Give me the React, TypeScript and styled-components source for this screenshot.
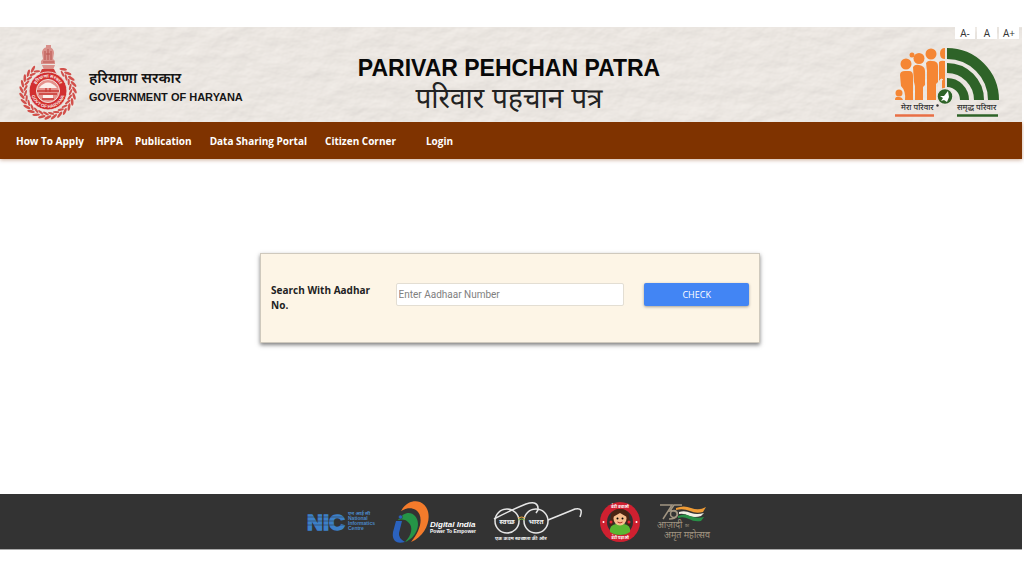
import React from "react";
import styled, { createGlobalStyle } from "styled-components";

const GlobalStyle = createGlobalStyle`
  *, *::before, *::after { box-sizing: border-box; }
  body { margin: 0; background: #fff; font-family: "Open Sans", "Noto Sans", sans-serif; }
`;

const Page = styled.div`
  display: flex;
  flex-direction: column;
  min-height: 100vh;
  padding: 27px 2px 26px 0;
`;

const Banner = styled.header`
  position: relative;
  display: grid;
  grid-template-columns: 1fr auto 1fr;
  align-items: center;
  min-height: 95px;
  padding: 16px 22px 0 18px;
  background: #e6e1dc;
  isolation: isolate;
`;

const Paper = styled.svg`
  position: absolute;
  inset: 0;
  width: 100%;
  height: 100%;
  z-index: -1;
`;

const TextSizes = styled.div`
  position: absolute;
  top: 0;
  right: 3px;
  display: flex;
  gap: 2px;
`;

const SizeButton = styled.button`
  min-width: 20px;
  height: 12px;
  padding: 0 3px;
  border: 0;
  background: #fff;
  color: #333;
  font: 10px/10px "Open Sans", sans-serif;
`;

const State = styled.div`
  display: flex;
  align-items: center;
  gap: 10px;
`;

const StateName = styled.div`
  font-family: "Liberation Sans", "Noto Sans Devanagari", sans-serif;
  font-weight: 700;
  color: #151515;
  white-space: nowrap;
  padding-top: 8px;
`;

const StateHindi = styled.div`
  font-size: 15px;
  line-height: 20px;
  font-weight: 600;
`;

const StateEnglish = styled.div`
  font-size: 11px;
  line-height: 18px;
`;

const Titles = styled.div`
  padding-top: 3px;
  text-align: center;
  white-space: nowrap;
`;

const Title = styled.h1`
  margin: 0;
  font: 700 23px/30px "Liberation Sans", sans-serif;
  color: #080808;
`;

const HindiTitle = styled.div`
  font: 400 28px/32px "Liberation Sans", "Noto Sans Devanagari", sans-serif;
  color: #222;
`;

const SchemeLogo = styled.div`
  justify-self: end;
  height: 73px;
`;

const Nav = styled.nav`
  display: flex;
  flex-wrap: wrap;
  align-items: center;
  min-height: 37px;
  padding: 0 16px;
  background: #7f3300;
  box-shadow: 0 1px 4px rgba(127, 51, 0, 0.4);
`;

const NavLink = styled.a<{ $gap?: number }>`
  margin-right: ${(p) => p.$gap ?? 12}px;
  color: #fff;
  font-size: 10px;
  line-height: 16px;
  font-weight: 700;
  text-decoration: none;
  white-space: nowrap;
`;

const Main = styled.main`
  flex: 1;
  padding: 94px 2px 24px 0;
`;

const SearchCard = styled.form`
  display: grid;
  grid-template-columns: 1fr 2fr 1fr;
  width: 49%;
  min-width: 440px;
  margin: 0 auto;
  padding: 29px 0;
  background: #fdf5e6;
  border: 1px solid #cfc9bd;
  box-shadow: 0 2px 4px rgba(0, 0, 0, 0.5);
`;

const Cell = styled.div`
  padding: 0 10px;
`;

const Label = styled.label`
  display: block;
  color: #222;
  font-size: 10px;
  line-height: 15px;
  font-weight: 700;
`;

const AadhaarInput = styled.input`
  display: block;
  width: 100%;
  height: 23px;
  padding: 0 2px;
  border: 1px solid #e3ded3;
  border-radius: 2px;
  background: #fff;
  color: #333;
  font: 10px/16px Roboto, "Open Sans", sans-serif;
  &::placeholder { color: #808080; opacity: 1; }
`;

const CheckButton = styled.button`
  display: block;
  width: 100%;
  height: 23px;
  border: 0;
  border-radius: 2px;
  background: #4285f4;
  color: #fff;
  font: 9px/16px "Open Sans", sans-serif;
  box-shadow: 0 1px 3px rgba(0, 0, 0, 0.35);
`;

const Footer = styled.footer`
  display: flex;
  flex-wrap: wrap;
  align-items: center;
  justify-content: center;
  gap: 16px;
  min-height: 56px;
  padding-right: 3px;
  background: #333;
  border-bottom: 1px solid #aaa;
`;

const deva = '"Noto Sans Devanagari", "Noto Sans", sans-serif';

const leafAngles = Array.from({ length: 23 }, (_, i) => -55 + i * 13.2);

function Emblem() {
  return (
    <svg width="61" height="76" viewBox="0 0 61 76" role="img" aria-label="Haryana emblem">
      <g fill="#d9908a">
        <path d="M24 8c0-4 3-6 6-6s6 2 6 6l-1 6 2 2v3H23v-3l2-2z" />
        <path d="M24 20h13l-2 5h-9zM28 0h5v4h-5z" />
      </g>
      <g stroke="#b9554f" strokeWidth="1" fill="none">
        <path d="M27 6v9M30 4v11M33 6v9M25 17h11M28 9h4" />
      </g>
      <g fill="#d2504b">
        {leafAngles.map((a) => (
          <g key={a} transform={`translate(30 46) rotate(${a})`}>
            <ellipse cx="26.500" cy="0" rx="1.3" ry="3.8" transform="rotate(-28 26.500 0)" />
            <ellipse cx="22.500" cy="2" rx="1.1" ry="3.3" transform="rotate(28 22.500 2)" />
          </g>
        ))}
      </g>
      <path d="M24 24h12l3 6H21z" fill="#cf3b38" />
      <circle cx="30" cy="46" r="19" fill="#d22f2f" stroke="#f0dcd8" />
      <path id="emblem-top" d="M16.500 46a13.500 13.500 0 0 1 27 0" fill="none" />
      <path id="emblem-bottom" d="M13 46a17 17 0 0 0 34 0" fill="none" />
      <g fill="#f8e9e6" fontSize="4.500" fontWeight="700" textAnchor="middle">
        <text fontFamily={deva}><textPath href="#emblem-top" startOffset="50%">हरियाणा सरकार</textPath></text>
        <text fontFamily="Liberation Sans"><textPath href="#emblem-bottom" startOffset="50%">GOVT OF HARYANA</textPath></text>
      </g>
      <circle cx="30" cy="46" r="11.500" fill="#e5918c" stroke="#f3dfdb" />
      <path d="M21 43q9-11 18 0zM25 50h10v3H25z" fill="#fbeeeb" />
      <path d="M19 46h22M21 49h18M28 43v4M32 43v4M24 54h12" stroke="#c93834" strokeWidth="1.300" />
    </svg>
  );
}

function FamilyLogo() {
  return (
    <svg width="106" height="73" viewBox="0 0 106 73" role="img" aria-label="मेरा परिवार समृद्ध परिवार">
      <g fill="#f58634">
        <circle cx="5" cy="47" r="3.500" />
        <path d="M1 54q0-4 4-3 3 0 4 3z" />
        <circle cx="12" cy="18" r="5.500" />
        <path d="M6 29q0-4 5-4h4q4 0 4 5v24h-8q1-9-4-14z" />
        <circle cx="25" cy="12.500" r="5.500" />
        <circle cx="18" cy="9" r="2.500" />
        <path d="M19 21q2-3 6-2 6 1 6 6v14l-2 2v13h-8V40l-1-4z" />
        <circle cx="37" cy="8" r="5.500" />
        <path d="M32 17q2-3 6-2 6 0 6 5v16l-2 2v16h-9V25z" />
        <path d="M51 2v11q-5 0-5-5.500t5-5.500zM45 16q2-2 6-1v32l-3 2V33q-3 0-3 6z" />
      </g>
      <path d="M49 34q-3-3-4 4v10" stroke="#f6ebe1" fill="none" />
      <g fill="none" stroke="#2e6328">
        <path d="M53 7.500A46.500 46.500 0 0 1 99.500 54" strokeWidth="11" />
        <path d="M53 22A32 32 0 0 1 85 54" strokeWidth="10" />
        <path d="M53 36.500A17.500 17.500 0 0 1 70.500 54" strokeWidth="9" />
      </g>
      <circle cx="51" cy="50.500" r="8" fill="#2e6328" stroke="#e9e5df" strokeWidth="1.500" />
      <path d="M46 50l4 0 4-5 1 6-2 5-3-2-3 1 2-3z" fill="#fff" />
      <g fontFamily={deva} fontSize="8" fill="#333" fontWeight="500">
        <text x="7" y="64">मेरा परिवार</text>
        <text x="63" y="64">समृद्ध परिवार</text>
      </g>
      <circle cx="43.500" cy="59.500" r="1.200" fill="#333" />
      <path d="M1 69.500h39" stroke="#e96f45" strokeWidth="2.500" />
      <path d="M63 69.500h41" stroke="#2e6328" strokeWidth="2.500" />
    </svg>
  );
}

function NicLogo() {
  return (
    <svg width="70" height="24" viewBox="0 0 70 24" role="img" aria-label="NIC">
      <text x="1" y="20" fontFamily="Liberation Sans" fontWeight="700" fontSize="22" fill="#3c80c8" stroke="#3c80c8" strokeWidth="1.500">NIC</text>
      <path d="M0 7h40M0 11h40M0 15h40" stroke="#333" strokeWidth="0.500" />
      <g fontSize="5" fill="#4b88c6" fontFamily="Liberation Sans" fontWeight="700">
        <text x="42" y="5" fontFamily={deva}>एन आई सी</text>
        <text x="42" y="10">National</text>
        <text x="42" y="15">Informatics</text>
        <text x="42" y="20">Centre</text>
      </g>
    </svg>
  );
}

function DigitalIndiaLogo() {
  return (
    <svg width="85" height="46" viewBox="0 0 85 46" role="img" aria-label="Digital India">
      <path d="M9 12C14 3 22 1 28 3c14 6 11 31-9 40 10-12 13-26 5-32-5-3-10-2-15 1z" fill="#f47b2b" />
      <path d="M6 21c5-8 13-9 17-4 7 8 1 22-10 26 7-7 8-15 4-19-3-4-7-4-11-3z" fill="#259447" />
      <path d="M4 22h6l-3 12q-1 5 6 9-7 2-10-1-3-3-2-9z" fill="#2b62be" />
      <circle cx="8.500" cy="18" r="2" fill="#2b62be" stroke="#333" strokeWidth="0.500" />
      <g fill="#fff" fontFamily="Liberation Sans" fontWeight="700">
        <text x="38" y="28" fontSize="8" fontStyle="italic">Digital India</text>
        <text x="38" y="34" fontSize="5">Power To Empower</text>
      </g>
    </svg>
  );
}

function SwachhBharatLogo() {
  return (
    <svg width="90" height="40" viewBox="0 0 90 40" role="img" aria-label="स्वच्छ भारत">
      <g fill="none" stroke="#e6e6e6" strokeWidth="1.500">
        <circle cx="14" cy="19" r="12" />
        <circle cx="43" cy="19" r="12" />
        <path d="M1 17Q18 8 33 2q13-4 12 6l-2 3M55 18q15-6 27-11 9-2 5 8" />
      </g>
      <path d="M25 16q4-2 7 0" stroke="#f0a63b" fill="none" />
      <path d="M25 18q4-2 7 0" stroke="#7ab54a" fill="none" />
      <g fontFamily={deva} fontSize="7" fontWeight="700" fill="#f1f1f1">
        <text x="14" y="22" textAnchor="middle">स्वच्छ</text>
        <text x="43" y="22" textAnchor="middle">भारत</text>
        <text x="2" y="38" fontSize="5">एक कदम स्वच्छता की ओर</text>
      </g>
    </svg>
  );
}

function BetiLogo() {
  return (
    <svg width="42" height="42" viewBox="0 0 42 42" role="img" aria-label="बेटी बचाओ बेटी पढ़ाओ">
      <circle cx="21" cy="21" r="20" fill="#cf2030" />
      <circle cx="21" cy="21" r="13" fill="#303030" />
      <path d="M11 31q-1-7 6-8h8q7 1 6 8-4 3-10 3t-10-3z" fill="#5bb531" />
      <path d="M12 16q0-8 9-8t9 8l2 9q-4 1-5-5H15q-1 6-5 5z" fill="#4a2413" />
      <ellipse cx="21" cy="17.500" rx="6.500" ry="7" fill="#f5bd8c" />
      <path d="M14 16q1-7 7-7t7 7l-7-4z" fill="#4a2413" />
      <circle cx="12" cy="21" r="1.500" fill="#e22835" />
      <circle cx="30" cy="21" r="1.500" fill="#e22835" />
      <circle cx="18.500" cy="17.500" r="1" />
      <circle cx="23.500" cy="17.500" r="1" />
      <path d="M18.500 21q2.500 2 5 0" stroke="#b52727" fill="none" />
      <g fill="#fff" fontFamily={deva} fontSize="4" fontWeight="700" textAnchor="middle">
        <text x="21" y="7">बेटी बचाओ</text>
        <text x="21" y="38">बेटी पढ़ाओ</text>
      </g>
      <circle cx="4.500" cy="21" r="1" fill="#fff" />
      <circle cx="37.500" cy="21" r="1" fill="#fff" />
    </svg>
  );
}

function AmritLogo() {
  return (
    <svg width="56" height="40" viewBox="0 0 56 40" role="img" aria-label="आज़ादी का अमृत महोत्सव">
      <g fill="none" stroke="#a39682" strokeWidth="1.500">
        <path d="M3 3h12L6 17M25 3h-8l-4 6q8-1 7 4-1 4-8 4" />
        <circle cx="17" cy="12" r="3.500" />
      </g>
      <path d="M19 6q8-3 15 0 8 3 15-1l-3 5q-7 2-13-1-7-3-14-1z" fill="#ef9b35" />
      <path d="M22 10q6-2 12 1 6 2 13 0l-3 3q-6 2-12 0-5-3-10-2z" fill="#f2efe5" />
      <path d="M21 14q7-3 12 0 7 3 14 1l-3 4q-7 1-12-2-6-3-11-1z" fill="#299047" />
      <g fontFamily={deva} fill="#a39682">
        <text x="0" y="26" fontSize="9">आज़ादी</text>
        <text x="28" y="25" fontSize="4">का</text>
        <text x="7" y="36" fontSize="9">अमृत महोत्सव</text>
      </g>
    </svg>
  );
}

const links: { text: string; gap?: number }[] = [
  { text: "How To Apply" },
  { text: "HPPA" },
  { text: "Publication", gap: 18 },
  { text: "Data Sharing Portal", gap: 18 },
  { text: "Citizen Corner", gap: 30 },
  { text: "Login" },
];

export default function App() {
  return (
    <>
      <GlobalStyle />
      <Page>
        <Banner>
          <Paper aria-hidden="true">
            <filter id="paper" x="0" y="0" width="100%" height="100%">
              <feTurbulence type="fractalNoise" baseFrequency="0.04 0.06" numOctaves="4" seed="8" />
              <feDiffuseLighting lightingColor="#f0ebe6" surfaceScale="0.700" diffuseConstant="1.120">
                <feDistantLight azimuth="60" elevation="58" />
              </feDiffuseLighting>
            </filter>
            <rect width="100%" height="100%" filter="url(#paper)" />
          </Paper>
          <State>
            <Emblem />
            <StateName>
              <StateHindi lang="hi">हरियाणा सरकार</StateHindi>
              <StateEnglish>GOVERNMENT OF HARYANA</StateEnglish>
            </StateName>
          </State>
          <Titles>
            <Title>PARIVAR PEHCHAN PATRA</Title>
            <HindiTitle lang="hi">परिवार पहचान पत्र</HindiTitle>
          </Titles>
          <SchemeLogo>
            <FamilyLogo />
          </SchemeLogo>
          <TextSizes>
            <SizeButton type="button">A-</SizeButton>
            <SizeButton type="button">A</SizeButton>
            <SizeButton type="button">A+</SizeButton>
          </TextSizes>
        </Banner>
        <Nav>
          {links.map((l) => (
            <NavLink key={l.text} href="#" $gap={l.gap}>{l.text}</NavLink>
          ))}
        </Nav>
        <Main>
          <SearchCard>
            <Cell>
              <Label htmlFor="aadhaar">Search With Aadhar No.</Label>
            </Cell>
            <Cell>
              <AadhaarInput id="aadhaar" type="text" placeholder="Enter Aadhaar Number" />
            </Cell>
            <Cell>
              <CheckButton type="button">CHECK</CheckButton>
            </Cell>
          </SearchCard>
        </Main>
        <Footer>
          <NicLogo />
          <DigitalIndiaLogo />
          <SwachhBharatLogo />
          <BetiLogo />
          <AmritLogo />
        </Footer>
      </Page>
    </>
  );
}
